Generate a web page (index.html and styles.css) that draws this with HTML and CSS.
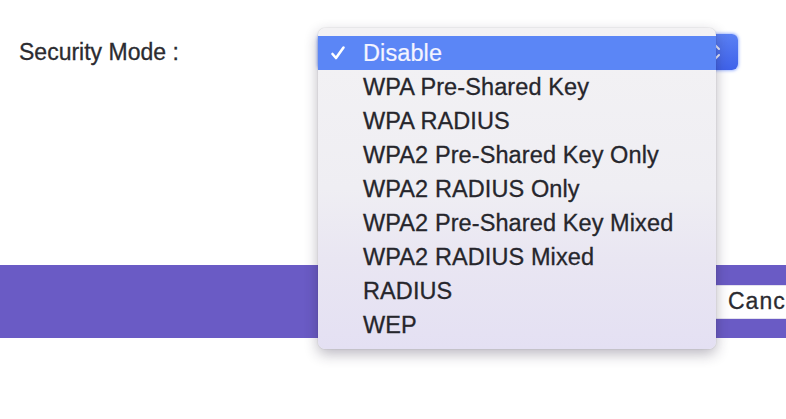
FILE: index.html
```html
<!DOCTYPE html>
<html>
<head>
<meta charset="utf-8">
<link rel="stylesheet" href="styles.css">
</head>
<body>
<div class="page">
  <div class="field-row">
    <div class="label">Security Mode :</div>
    <div class="select">
      <div class="select-arrows">
        <svg width="14" height="22" viewBox="0 0 14 22"><path d="M3 8 L7 4 L11 8" fill="none" stroke="#e8ecff" stroke-width="2" stroke-linecap="round" stroke-linejoin="round"/><path d="M3 14 L7 18 L11 14" fill="none" stroke="#e8ecff" stroke-width="2" stroke-linecap="round" stroke-linejoin="round"/></svg>
      </div>
    </div>
  </div>
  <div class="action-bar">
    <button class="btn">Cancel</button>
  </div>
  <ul class="menu">
    <li class="item selected"><span class="check"><svg width="16" height="16" viewBox="0 0 16 16"><path d="M2.5 9 L6 13 L13.5 2.5" fill="none" stroke="#ffffff" stroke-width="2.6" stroke-linecap="round" stroke-linejoin="round"/></svg></span>Disable</li>
    <li class="item"><span class="check"></span>WPA Pre-Shared Key</li>
    <li class="item"><span class="check"></span>WPA RADIUS</li>
    <li class="item"><span class="check"></span>WPA2 Pre-Shared Key Only</li>
    <li class="item"><span class="check"></span>WPA2 RADIUS Only</li>
    <li class="item"><span class="check"></span>WPA2 Pre-Shared Key Mixed</li>
    <li class="item"><span class="check"></span>WPA2 RADIUS Mixed</li>
    <li class="item"><span class="check"></span>RADIUS</li>
    <li class="item"><span class="check"></span>WEP</li>
  </ul>
</div>
</body>
</html>
```

FILE: styles.css
```css
html, body {
  margin: 0;
  padding: 0;
  background: #ffffff;
  overflow: hidden;
}
.page {
  position: relative;
  width: 786px;
  height: 419px;
  overflow: hidden;
  font-family: "Liberation Sans", Arial, sans-serif;
  padding-top: 34px;
  box-sizing: border-box;
}
.field-row {
  display: flex;
  align-items: center;
  height: 36px;
  padding-left: 19px;
}
.label {
  width: 299px;
  font-size: 23px;
  color: #2b2b30;
  -webkit-text-stroke: 0.3px #2b2b30;
}
.select {
  width: 420px;
  height: 36px;
  border-radius: 6px;
  background: #ffffff;
  display: flex;
  justify-content: flex-end;
  box-shadow: 0 0 3px 1px rgba(90, 130, 255, 0.55);
}
.select-arrows {
  width: 34px;
  height: 36px;
  border-radius: 0 6px 6px 0;
  background: linear-gradient(#5a80f4, #3f62ea);
  display: flex;
  align-items: center;
}
.select-arrows svg {
  margin-left: 4px;
}
.action-bar {
  margin-top: 195px;
  height: 73px;
  background: #6a5bc5;
  display: flex;
  align-items: center;
}
.btn {
  margin-left: 712px;
  flex: none;
  height: 34px;
  padding: 0 12px 0 15px;
  background: #ffffff;
  border: 1px solid #e4e2ee;
  border-radius: 3px;
  font-family: "Liberation Sans", Arial, sans-serif;
  font-size: 23px;
  letter-spacing: 1px;
  color: #2b2b30;
  -webkit-text-stroke: 0.3px #2b2b30;
  text-align: left;
}
.menu {
  position: absolute;
  left: 318px;
  top: 28px;
  width: 398px;
  margin: 0;
  padding: 8px 0 7px 0;
  list-style: none;
  border-radius: 7px;
  background: linear-gradient(#f3f2f4 0%, #efeef3 50%, #e9e6f2 72%, #e4e0f3 100%);
  box-shadow: 0 5px 14px rgba(40, 30, 60, 0.32), 0 0 1px rgba(0, 0, 0, 0.35);
}
.item {
  display: flex;
  align-items: center;
  height: 34px;
  padding-left: 12px;
  font-size: 23.5px;
  letter-spacing: 0.1px;
  color: #26262c;
  -webkit-text-stroke: 0.3px #26262c;
  white-space: nowrap;
}
.check {
  width: 33px;
  display: flex;
  align-items: center;
}
.item.selected {
  background: #5b86f6;
  color: #f4f4ff;
  -webkit-text-stroke: 0.2px #f4f4ff;
}
```
